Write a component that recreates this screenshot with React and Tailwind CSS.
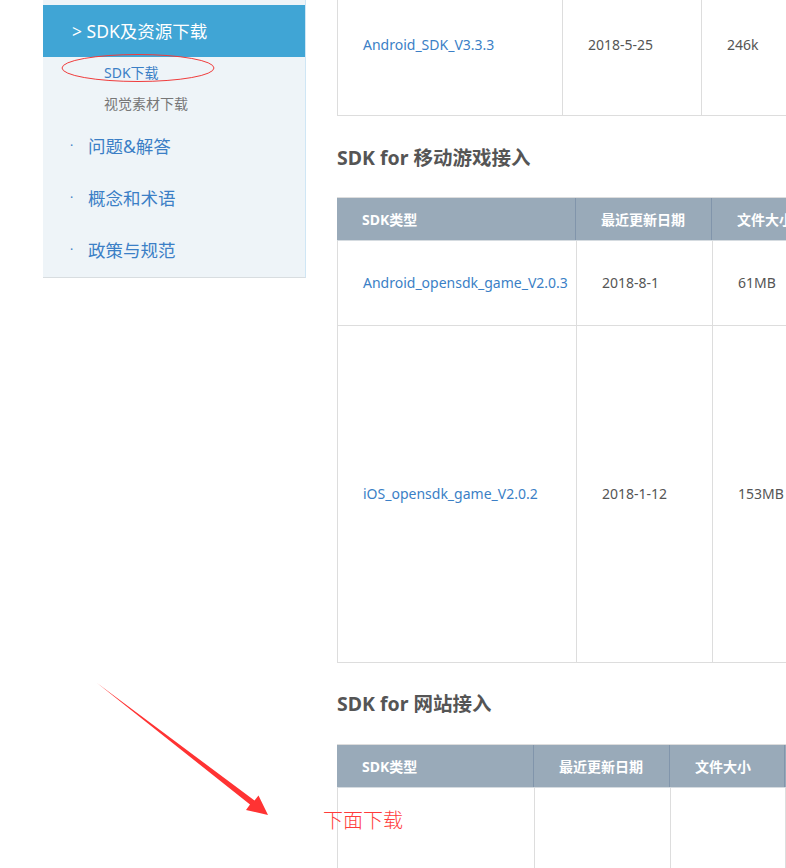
import React from "react";

const font = { fontFamily: '"Noto Sans", "Noto Sans CJK SC", sans-serif' };

const sideMain = ["问题&解答", "概念和术语", "政策与规范"];

const Row = ({ cols, cells, height, top }) => (
  <div className="flex border-l border-[#dddddd] border-b" style={{ height }}>
    {cells.map((c, i) => (
      <div
        key={i}
        className={
          "shrink-0 border-r border-[#dddddd] pl-[25px] flex text-[14px] " +
          (top ? "items-start pt-[35px]" : "items-center") +
          (i === 0 ? " text-[#3b7fc6]" : " text-[#555555]")
        }
        style={{ width: cols[i] }}
      >
        <span className="leading-[20px] whitespace-nowrap">{c}</span>
      </div>
    ))}
  </div>
);

const Head = ({ cols, labels }) => (
  <div className="flex h-[44px] bg-[#99aab9] border-t border-[#dddddd] border-b border-b-[#d5dbe0]">
    {labels.map((l, i) => (
      <div
        key={i}
        className="shrink-0 border-r border-[#8195ab] pl-[25px] flex items-center text-[14px] font-bold text-white whitespace-nowrap"
        style={{ width: cols[i] }}
      >
        {l}
      </div>
    ))}
  </div>
);

export default function App() {
  const labels = ["SDK类型", "最近更新日期", "文件大小", ""];
  return (
    <div className="relative w-[786px] h-[868px] overflow-hidden bg-white" style={font}>
      <div className="flex pl-[43px] items-start">
        {/* Sidebar */}
        <div className="w-[263px] shrink-0 bg-[#eef4f8] pt-[5px] border-r border-[#cfe6f5] border-b border-b-[#d8dde0]">
          <div className="h-[52px] bg-[#40a5d5] flex items-center pl-[29px] text-white text-[17.5px]">
            &gt; SDK及资源下载
          </div>
          <div className="h-[31px] flex items-center pl-[61px] text-[14px] text-[#3b7fc6]">SDK下载</div>
          <div className="h-[31px] flex items-center pl-[61px] text-[14px] text-[#777777]">视觉素材下载</div>
          <div className="pt-[1px] pb-[1px]">
            {sideMain.map((t) => (
              <div key={t} className="h-[52px] flex items-center pl-[27px] text-[17.5px] text-[#3b7fc6]">
                <span className="w-[18px] text-[12px]">·</span>
                {t}
              </div>
            ))}
          </div>
        </div>

        {/* Main content */}
        <div className="ml-[31px] w-[600px] shrink-0">
          <Row cols={[225, 139, 236]} cells={["Android_SDK_V3.3.3", "2018-5-25", "246k"]} height={116} top />

          <h2 className="mt-[30px] text-[19.5px] leading-[24px] font-bold text-[#555555]">SDK for 移动游戏接入</h2>
          <div className="mt-[27px]">
            <Head cols={[239, 136, 225]} labels={labels} />
            <Row cols={[239, 136, 225]} cells={["Android_opensdk_game_V2.0.3", "2018-8-1", "61MB"]} height={85} />
            <Row cols={[239, 136, 225]} cells={["iOS_opensdk_game_V2.0.2", "2018-1-12", "153MB"]} height={337} />
          </div>

          <h2 className="mt-[29px] text-[19.5px] leading-[24px] font-bold text-[#555555]">SDK for 网站接入</h2>
          <div className="mt-[28px]">
            <Head cols={[197, 136, 115, 152]} labels={labels} />
            <Row cols={[197, 136, 115, 152]} cells={["", "", "", ""]} height={200} />
          </div>
        </div>
      </div>

      {/* annotations */}
      <svg className="absolute left-0 top-0 pointer-events-none" width="786" height="868">
        <ellipse cx="138" cy="68" rx="76" ry="13.5" fill="none" stroke="#f03c3c" strokeWidth="1" />
        <polygon
          points="97,683 254.5,800.5 258.5,795.5 268,815 246,810 250,804.5"
          fill="#ff3333"
        />
      </svg>
      <div className="absolute left-[323px] top-[808px] text-[20px] leading-[26px] text-[#ff3b3b] font-light" style={font}>
        下面下载
      </div>
    </div>
  );
}
